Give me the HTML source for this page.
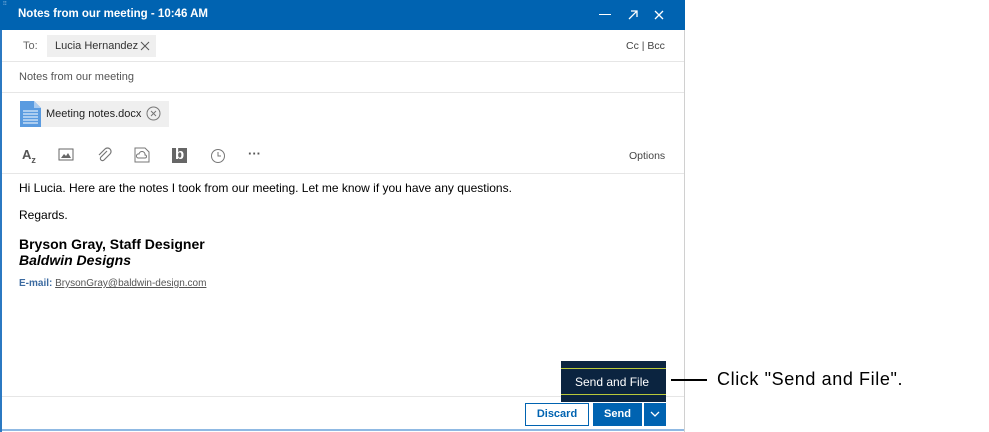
<!DOCTYPE html>
<html><head><style>
body{margin:0;width:989px;height:432px;background:#fff;font-family:"Liberation Sans",Arial,sans-serif;position:relative;overflow:hidden}
.a{position:absolute}
.hl{position:absolute;left:2px;width:682px;height:1px;background:#e6e6e6}
</style></head><body>
<div class="a" style="left:0;top:0;width:2px;height:432px;background:#2b79c2"></div>
<div class="a" style="left:684px;top:0;width:1px;height:432px;background:#d0d0d0"></div>
<div class="a" style="left:0;top:0;width:685px;height:30px;background:#0063b1"></div>
<div class="a" style="left:3px;top:3px;color:#cfe0f2;font-size:6px;line-height:3px">⁝⁝</div>
<div class="a" style="left:18px;top:8px;color:#fff;font-weight:bold;font-size:11.5px">Notes from our meeting - 10:46 AM</div>
<div class="a" style="left:599px;top:14px;width:12px;height:1px;background:#fff"></div>
<svg class="a" style="left:627px;top:9px" width="12" height="12"><path d="M2 10L10 2M4 2H10V8" stroke="#fff" stroke-width="1.3" fill="none"/></svg>
<svg class="a" style="left:653px;top:9px" width="12" height="12"><path d="M2 2L10 10M10 2L2 10" stroke="#fff" stroke-width="1.3"/></svg>
<div class="a" style="left:23px;top:40px;font-size:11px;color:#666">To:</div>
<div class="a" style="left:47px;top:35px;width:109px;height:22px;background:#efefef"></div>
<div class="a" style="left:55px;top:40px;font-size:11px;color:#333">Lucia Hernandez</div>
<svg class="a" style="left:140px;top:41px" width="10" height="10"><path d="M1 1L9 9M9 1L1 9" stroke="#555" stroke-width="1"/></svg>
<div class="a" style="left:626px;top:40px;font-size:10.5px;color:#444">Cc | Bcc</div>
<div class="hl" style="top:61px"></div>
<div class="a" style="left:19px;top:71px;font-size:11px;color:#555">Notes from our meeting</div>
<div class="hl" style="top:92px"></div>
<div class="a" style="left:20px;top:101px;width:149px;height:26px;background:#efefef"></div>
<svg class="a" style="left:20px;top:101px" width="21" height="26"><path d="M0 0H14L21 7V26H0Z" fill="#5a9be0"/><path d="M14 0V7H21Z" fill="#a9cbf0"/><path d="M3 10H18M3 13H18M3 16H18M3 19H18M3 22H18" stroke="#fff" stroke-width="1"/></svg>
<div class="a" style="left:46px;top:108px;font-size:11px;color:#222">Meeting notes.docx</div>
<svg class="a" style="left:146px;top:106px" width="15" height="15"><circle cx="7.5" cy="7.5" r="6.5" stroke="#777" fill="none"/><path d="M5 5L10 10M10 5L5 10" stroke="#777"/></svg>
<div class="a" style="left:22px;top:147px;font-size:13px;color:#555;font-weight:bold">A<span style="font-size:9px;position:relative;top:4px">z</span></div>
<svg class="a" style="left:58px;top:148px" width="16" height="14"><rect x="1" y="1" width="14" height="11" fill="none" stroke="#666"/><path d="M3 10L6 6L8 8L10 5L13 10Z" fill="#666"/></svg>
<svg class="a" style="left:96px;top:147px" width="16" height="16"><path d="M11 4L5 10a2 2 0 0 0 3 3L14 7a3.5 3.5 0 0 0-5-5L3 8" stroke="#777" fill="none" stroke-width="1.2"/></svg>
<svg class="a" style="left:134px;top:147px" width="16" height="16"><path d="M1 1H11L15 5V15H1Z" fill="none" stroke="#777"/><path d="M4 11a2 2 0 0 1 1-4a3 3 0 0 1 6 1a1.5 1.5 0 0 1 0 3Z" fill="none" stroke="#777"/></svg>
<div class="a" style="left:172px;top:148px;width:15px;height:15px;background:#666"></div>
<div class="a" style="left:175px;top:146px;color:#fff;font-weight:bold;font-size:15px">b</div>
<svg class="a" style="left:210px;top:148px" width="16" height="16"><circle cx="8" cy="8" r="6.5" fill="none" stroke="#777"/><path d="M8 4V8H11" fill="none" stroke="#777"/></svg>
<div class="a" style="left:248px;top:146px;font-size:13px;color:#555;font-weight:bold">···</div>
<div class="a" style="left:629px;top:150px;font-size:10.5px;color:#444">Options</div>
<div class="hl" style="top:173px"></div>
<div class="a" style="left:19px;top:181px;font-size:12px;color:#000">Hi Lucia. Here are the notes I took from our meeting. Let me know if you have any questions.</div>
<div class="a" style="left:19px;top:208px;font-size:12px;color:#000">Regards.</div>
<div class="a" style="left:19px;top:236px;font-size:14px;font-weight:bold;color:#000">Bryson Gray, Staff Designer</div>
<div class="a" style="left:19px;top:252px;font-size:14px;font-weight:bold;font-style:italic;color:#000">Baldwin Designs</div>
<div class="a" style="left:19px;top:278px;font-size:10px;color:#555"><b style="color:#3b6aa0">E-mail:</b> <u>BrysonGray@baldwin-design.com</u></div>
<div class="hl" style="top:396px"></div>
<div class="a" style="left:525px;top:403px;width:62px;height:21px;border:1px solid #0063b1;background:#fff;color:#0063b1;font-size:11px;font-weight:bold;text-align:center;line-height:21px">Discard</div>
<div class="a" style="left:593px;top:403px;width:49px;height:23px;background:#0063b1;color:#fff;font-size:11px;font-weight:bold;text-align:center;line-height:23px">Send</div>
<div class="a" style="left:644px;top:403px;width:22px;height:23px;background:#0063b1"></div>
<svg class="a" style="left:650px;top:410px" width="10" height="8"><path d="M1 2L5 6L9 2" stroke="#fff" fill="none" stroke-width="1.3"/></svg>
<div class="a" style="left:561px;top:361px;width:105px;height:41px;background:#0b2440"></div>
<div class="a" style="left:561px;top:368px;width:105px;height:1px;background:#b9c83a"></div>
<div class="a" style="left:561px;top:394px;width:105px;height:1px;background:#b9c83a"></div>
<div class="a" style="left:575px;top:375px;font-size:12px;color:#fff">Send and File</div>
<div class="a" style="left:2px;top:429px;width:682px;height:2px;background:#8fb9e3"></div>
<div class="a" style="left:671px;top:379px;width:36px;height:2px;background:#000"></div>
<div class="a" style="left:717px;top:369px;font-size:18px;letter-spacing:0.6px;color:#000">Click "Send and File".</div>
</body></html>
